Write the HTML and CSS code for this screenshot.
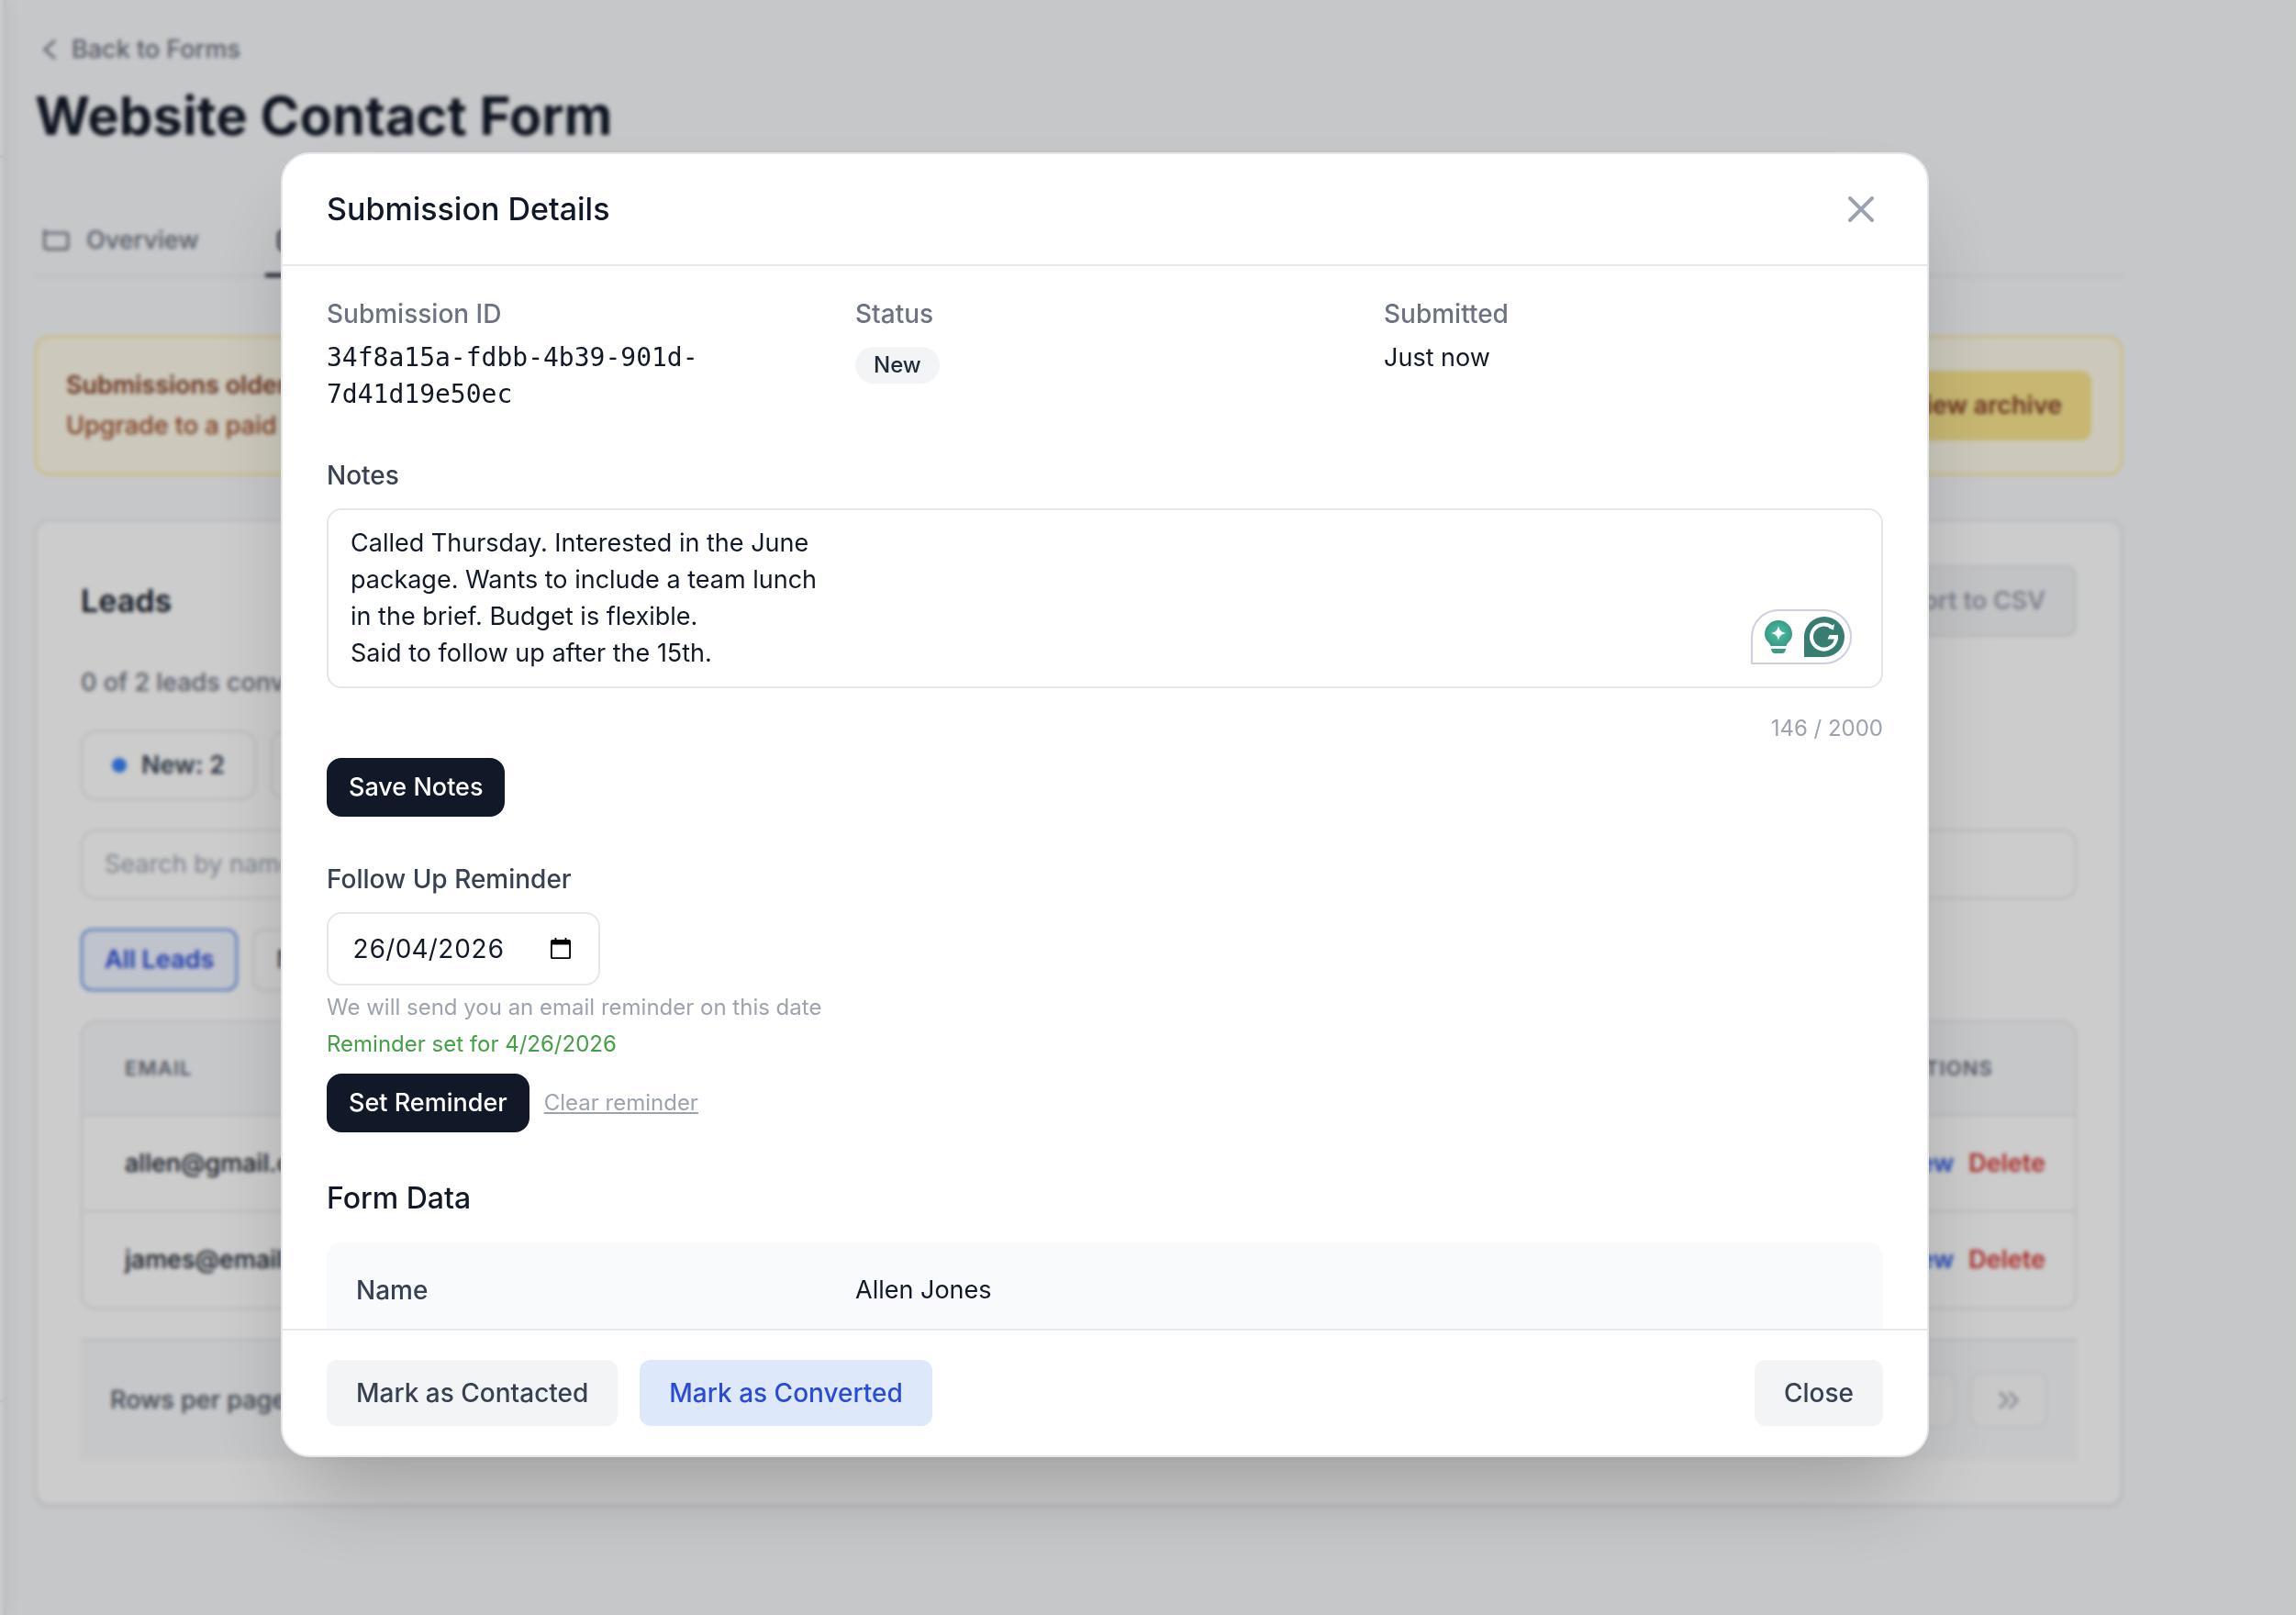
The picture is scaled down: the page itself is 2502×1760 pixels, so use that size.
FILE: index.html
```html
<!DOCTYPE html>
<html lang="en">
  <head>
    <meta charset="UTF-8" />
    <meta name="viewport" content="width=device-width, initial-scale=1.0" />
    <title>Website Contact Form</title>
    <link rel="stylesheet" href="styles.css">
  </head>
  <body>
    <aside class="sidebar">
      <div class="sidebar-brand"></div>
      <div class="sidebar-account"></div>
    </aside>

    <main class="page">
      <a class="back-link" href="#forms">
        <svg class="back-icon" viewBox="0 0 24 24"><path d="M16 19l-8-7 8-7" /></svg>
        Back to Forms
      </a>
      <h1>Website Contact Form</h1>

      <nav class="tabs">
        <a class="tab" href="#overview">
          <svg class="tab-icon" viewBox="0 0 24 24">
            <path d="M2 4v13a2 2 0 0 0 2 2h15a2 2 0 0 0 2-2V8a2 2 0 0 0-2-2H4a2 2 0 0 1-2-2" />
          </svg>
          Overview
        </a>
        <a class="tab tab-active" href="#leads">
          <svg class="tab-icon" viewBox="0 0 24 24">
            <rect x="5" y="4" width="14" height="16" rx="4" />
            <path d="M9 10h6M9 14h6" />
          </svg>
          Leads
        </a>
      </nav>

      <section class="banner">
        <div>
          <p class="banner-title">Submissions older than 30 days</p>
          <p class="banner-text">Upgrade to a paid plan</p>
        </div>
        <button class="banner-button" type="button">View archive</button>
      </section>

      <section class="card">
        <div class="card-header">
          <h2>Leads</h2>
          <button class="export-button" type="button">Export to CSV</button>
        </div>
        <p class="summary">0 of 2 leads converted</p>
        <div class="chips">
          <span class="chip"><span class="dot"></span>New: 2</span>
          <span class="chip"><span class="dot dot-amber"></span>0</span>
        </div>
        <input class="search" type="search" aria-label="Search leads" placeholder="Search by name or email" />
        <div class="filters">
          <button class="filter filter-active" type="button">All Leads</button>
          <button class="filter" type="button">New</button>
        </div>
        <div class="table-wrapper">
          <table>
            <thead>
              <tr>
                <th>Email</th>
                <th class="actions">Actions</th>
              </tr>
            </thead>
            <tbody>
              <tr>
                <td>allen@gmail.com</td>
                <td class="actions"><button class="view" type="button">View</button><button class="delete" type="button">Delete</button></td>
              </tr>
              <tr>
                <td>james@email.com</td>
                <td class="actions"><button class="view" type="button">View</button><button class="delete" type="button">Delete</button></td>
              </tr>
            </tbody>
          </table>
        </div>
        <div class="pagination">
          <span>Rows per page</span>
          <div class="pager">
            <button class="pager-button" type="button" aria-label="Next page">
              <svg viewBox="0 0 24 24"><path d="M9 18l6-6-6-6" /></svg>
            </button>
            <button class="pager-button" type="button" aria-label="Last page">
              <svg viewBox="0 0 24 24"><path d="M5 18l6-6-6-6M13 18l6-6-6-6" /></svg>
            </button>
          </div>
        </div>
      </section>
    </main>

    <div class="overlay">
      <div class="modal" role="dialog" aria-modal="true" aria-labelledby="modal-title">
        <header class="modal-header">
          <h2 id="modal-title">Submission Details</h2>
          <button class="close-icon" type="button" aria-label="Close">
            <svg viewBox="0 0 24 24"><path d="M6 18L18 6M6 6l12 12" /></svg>
          </button>
        </header>

        <div class="modal-body">
          <dl class="details">
            <div>
              <dt>Submission ID</dt>
              <dd class="mono">34f8a15a-fdbb-4b39-901d-7d41d19e50ec</dd>
            </div>
            <div>
              <dt>Status</dt>
              <dd><span class="badge">New</span></dd>
            </div>
            <div>
              <dt>Submitted</dt>
              <dd>Just now</dd>
            </div>
          </dl>

          <section class="field">
            <label for="notes">Notes</label>
            <div class="notes-wrapper">
              <textarea id="notes" rows="4" maxlength="2000" spellcheck="false">Called Thursday. Interested in the June
package. Wants to include a team lunch
in the brief. Budget is flexible.
Said to follow up after the 15th.</textarea>
              <div class="assistant">
                <svg class="assistant-bulb" viewBox="0 0 32 38">
                  <defs>
                    <radialGradient id="bulb">
                      <stop offset="0.3" stop-color="#43b99d" />
                      <stop offset="1" stop-color="#3c9a85" />
                    </radialGradient>
                  </defs>
                  <path fill="url(#bulb)" d="M16 1a15 15 0 0 1 15 15c0 5-3 8-5 10-1 1-1 3-2 3H8c-1 0-1-2-2-3-2-2-5-5-5-10A15 15 0 0 1 16 1z" />
                  <path fill="#fff" d="M16 7c1 5 3 7 8 8-5 1-7 3-8 8-1-5-3-7-8-8 5-1 7-3 8-8z" />
                  <path fill="#3c9a85" d="M8 32h16c0 3-2 5-4 5h-8c-2 0-4-2-4-5z" />
                </svg>
                <svg class="assistant-logo" viewBox="0 0 44 44">
                  <path fill="#377d71" d="M22 0a22 22 0 0 1 0 44H0V22A22 22 0 0 1 22 0z" />
                  <path fill="none" stroke="#fff" stroke-width="4" d="M30.500 12A13.500 13.500 0 1 0 35 22.500" />
                  <path fill="#fff" d="M33 8l-1 6.500-5-2z" />
                  <path fill="#fff" d="M25.500 24.500l2-4.500h9.500v4.500z" />
                </svg>
              </div>
            </div>
            <p class="counter">146 / 2000</p>
            <button class="primary" type="button">Save Notes</button>
          </section>

          <section class="field">
            <label for="reminder">Follow Up Reminder</label>
            <div class="date-field">
              <input id="reminder" type="text" inputmode="numeric" value="26/04/2026" />
              <button class="calendar" type="button" aria-label="Open calendar">
                <svg viewBox="0 0 24 26">
                  <path fill="#000" d="M5 0h2v2h10V0h2v2h3a2 2 0 0 1 2 2v19a2 2 0 0 1-2 2H2a2 2 0 0 1-2-2V4a2 2 0 0 1 2-2h3zM2 8v15h20V8z" />
                </svg>
              </button>
            </div>
            <p class="hint">We will send you an email reminder on this date</p>
            <p class="success">Reminder set for 4/26/2026</p>
            <div class="reminder-actions">
              <button class="primary" type="button">Set Reminder</button>
              <button class="clear" type="button">Clear reminder</button>
            </div>
          </section>

          <section class="field">
            <h3>Form Data</h3>
            <dl class="form-data">
              <dt>Name</dt>
              <dd>Allen Jones</dd>
            </dl>
          </section>
        </div>

        <footer class="modal-footer">
          <button class="secondary" type="button">Mark as Contacted</button>
          <button class="secondary convert" type="button">Mark as Converted</button>
          <button class="secondary close" type="button">Close</button>
        </footer>
      </div>
    </div>
  </body>
</html>
```
FILE: styles.css
```css
* {
  box-sizing: border-box;
}
body {
  display: flex;
  min-height: 100vh;
  margin: 0;
  background-color: #f8f9fb;
  font-family: "Inter", sans-serif;
  font-size: 27px;
  line-height: 40px;
  color: #111827;
}
h1,
h2,
h3,
p,
dl,
dd {
  margin: 0;
}
a {
  text-decoration: none;
}
button,
input,
textarea {
  font: inherit;
  color: inherit;
}
button {
  padding: 0;
  border: none;
  background: transparent;
  font-weight: 500;
  white-space: nowrap;
  cursor: pointer;
}
svg {
  display: block;
  fill: none;
  stroke-linecap: round;
  stroke-linejoin: round;
}

/* page behind the dialog */
.sidebar {
  display: flex;
  flex-direction: column;
  justify-content: space-between;
  flex: 0 0 6px;
  border-right: 2px solid #e5e7eb;
  background-color: white;
  box-shadow: 0 0 16px rgba(0, 0, 0, 0.1);
}
.sidebar-brand {
  height: 172px;
  border-bottom: 2px solid #e5e7eb;
}
.sidebar-account {
  height: 234px;
  border-top: 2px solid #e5e7eb;
}
.page {
  flex: 1;
  min-width: 0;
  padding: 34px 189px 64px 32px;
}
.back-link {
  display: flex;
  align-items: center;
  gap: 8px;
  width: fit-content;
  font-weight: 500;
  color: #6b7280;
}
.back-icon {
  width: 32px;
  height: 32px;
  stroke: #6b7280;
  stroke-width: 2;
}
h1 {
  margin-top: 16px;
  font-size: 58px;
  line-height: 72px;
  font-weight: 700;
}
.tabs {
  display: flex;
  gap: 64px;
  margin: 64px 0;
  border-bottom: 2px solid #e5e7eb;
}
.tab {
  display: flex;
  align-items: center;
  gap: 16px;
  margin-bottom: -2px;
  padding: 16px 8px;
  border-bottom: 4px solid transparent;
  font-weight: 500;
  color: #6b7280;
}
.tab-active {
  border-color: #111827;
  color: #111827;
}
.tab-icon {
  width: 32px;
  height: 32px;
  stroke: currentColor;
  stroke-width: 2;
}
.banner {
  display: flex;
  justify-content: space-between;
  align-items: center;
  margin-bottom: 48px;
  padding: 32px;
  border: 2px solid #fde68a;
  border-radius: 16px;
  background-color: #fffbeb;
}
.banner-title {
  margin-bottom: 4px;
  font-weight: 600;
  color: #854028;
}
.banner-text {
  font-weight: 500;
  color: #a04f2c;
}
.banner-button {
  padding: 18px 32px;
  border-radius: 12px;
  background-color: #f9e58f;
  font-weight: 600;
  color: #854028;
}
.card {
  padding: 48px;
  border: 2px solid #e5e7eb;
  border-radius: 16px;
  background-color: white;
  box-shadow: 0 2px 4px rgba(0, 0, 0, 0.06);
}
.card-header {
  display: flex;
  justify-content: space-between;
  align-items: center;
  margin-bottom: 30px;
}
.card-header h2 {
  font-size: 34px;
  font-weight: 600;
}
.export-button {
  padding: 17px 32px;
  border: 2px solid #e5e7eb;
  border-radius: 12px;
  background-color: #f3f4f6;
  font-weight: 600;
  color: #9ca3af;
}
.summary {
  font-weight: 500;
  color: #6b7280;
}
.chips {
  display: flex;
  gap: 16px;
  margin: 32px 0;
}
.chip {
  display: flex;
  align-items: center;
  gap: 16px;
  padding: 16px 32px;
  border: 2px solid #e5e7eb;
  border-radius: 16px;
  font-weight: 600;
  color: #374151;
}
.dot {
  width: 16px;
  height: 16px;
  border-radius: 50%;
  background-color: #3b82f6;
}
.dot-amber {
  background-color: #f59e0b;
}
.search {
  display: block;
  width: 100%;
  padding: 16px 24px;
  border: 2px solid #e5e7eb;
  border-radius: 16px;
  background-color: white;
  appearance: none;
}
.search::placeholder {
  color: #9ca3af;
}
.filters {
  display: flex;
  gap: 16px;
  margin: 32px 0;
}
.filter {
  padding: 12px 24px;
  border: 2px solid #e5e7eb;
  border-radius: 12px;
  color: #374151;
}
.filter-active {
  border-color: #4f84ee;
  background-color: #eff4ff;
  font-weight: 600;
  color: #2a4bd7;
}
.table-wrapper {
  border: 2px solid #e5e7eb;
  border-radius: 16px;
  overflow: hidden;
}
table {
  width: 100%;
  border-collapse: collapse;
}
th,
td {
  height: 105px;
  padding: 0 0 0 46px;
  border-bottom: 2px solid #e5e7eb;
  text-align: left;
  font-weight: 500;
}
th {
  height: 101px;
  background-color: #f8f9fb;
  font-size: 22px;
  font-weight: 600;
  letter-spacing: 0.05em;
  text-transform: uppercase;
  color: #6b7280;
}
tbody tr:last-child td {
  border-bottom: none;
}
.actions {
  width: 1%;
  padding-right: 32px;
  white-space: nowrap;
}
.actions button {
  font-weight: 600;
}
.view {
  margin-right: 16px;
  color: #2f5be0;
}
.delete {
  color: #d63a35;
}
.pagination {
  display: flex;
  justify-content: space-between;
  align-items: center;
  margin-top: 32px;
  padding: 35px 32px;
  border-top: 2px solid #e5e7eb;
  background-color: #f8f9fb;
  font-weight: 500;
  color: #4b5563;
}
.pager {
  display: flex;
  gap: 16px;
}
.pager-button {
  padding: 12px 24px;
  border: 2px solid #e5e7eb;
  border-radius: 12px;
  background-color: white;
  opacity: 0.6;
}
.pager-button svg {
  width: 32px;
  height: 32px;
  stroke: #6b7280;
  stroke-width: 2;
}

/* dialog */
.overlay {
  position: fixed;
  inset: 0;
  display: flex;
  padding: 166px 400px 172px 306px;
  background-color: rgba(0, 0, 0, 0.2);
  backdrop-filter: blur(2px);
}
.modal {
  display: flex;
  flex-direction: column;
  flex: 1;
  min-width: 0;
  border: 2px solid #e5e7eb;
  border-radius: 32px;
  background-color: white;
  box-shadow: 0 50px 100px -24px rgba(0, 0, 0, 0.25);
  overflow: hidden;
}
.modal-header {
  display: flex;
  justify-content: space-between;
  align-items: center;
  padding: 32px 48px;
  border-bottom: 2px solid #e5e7eb;
}
.modal-header h2 {
  font-size: 34px;
  line-height: 56px;
  font-weight: 500;
}
.close-icon svg {
  width: 48px;
  height: 48px;
  stroke: #9ca3af;
  stroke-width: 2;
}
.modal-body {
  flex: 1;
  min-height: 0;
  padding: 32px 48px;
  overflow-y: auto;
  scrollbar-width: none;
}
.details {
  display: grid;
  grid-template-columns: repeat(3, 1fr);
  gap: 32px;
}
.details dt {
  margin-bottom: 8px;
  font-size: 28px;
  font-weight: 500;
  color: #6b7280;
}
.details .mono {
  font-family: "DejaVu Sans Mono", monospace;
  font-size: 28px;
}
.badge {
  display: inline-block;
  margin-top: 8px;
  padding: 4px 20px;
  border-radius: 20px;
  background-color: #f3f4f6;
  font-size: 24px;
  line-height: 32px;
  font-weight: 500;
  color: #1f2937;
}
.field {
  margin-top: 48px;
}
.field label {
  display: block;
  margin-bottom: 16px;
  font-size: 28px;
  font-weight: 500;
  color: #374151;
}
.notes-wrapper {
  position: relative;
}
textarea {
  display: block;
  width: 100%;
  padding: 16px 24px;
  border: 2px solid #e5e7eb;
  border-radius: 16px;
  background-color: white;
  resize: none;
  overflow: hidden;
}
.assistant {
  position: absolute;
  right: 34px;
  bottom: 26px;
  display: flex;
  align-items: center;
  gap: 12px;
  padding: 6px 6px 6px 12px;
  border: 2px solid #cbcfe0;
  border-radius: 30px 30px 30px 0;
  background-color: white;
}
.assistant-bulb {
  width: 32px;
  height: 38px;
}
.assistant-logo {
  width: 44px;
  height: 44px;
  stroke-linecap: butt;
}
.counter,
.hint,
.success,
.clear {
  font-size: 24px;
  line-height: 32px;
}
.counter {
  margin: 28px 0 16px;
  text-align: right;
  color: #9ca3af;
}
.primary {
  padding: 12px 24px;
  border-radius: 16px;
  background-color: #111827;
  color: white;
}
.date-field {
  display: flex;
  align-items: center;
  width: 298px;
  padding: 18px 30px 18px 26px;
  border: 2px solid #e5e7eb;
  border-radius: 16px;
}
.date-field input {
  flex: 1;
  min-width: 0;
  padding: 0;
  border: none;
  outline: none;
  background: transparent;
  font-size: 28px;
  font-variant-numeric: tabular-nums;
}
.calendar svg {
  width: 22px;
  height: 24px;
}
.hint {
  margin-top: 8px;
  color: #9ca3af;
}
.success {
  margin: 8px 0 16px;
  color: #43a047;
}
.reminder-actions {
  display: flex;
  align-items: center;
  gap: 16px;
}
.clear {
  font-weight: 400;
  text-decoration: underline;
  color: #9ca3af;
}
h3 {
  margin-bottom: 24px;
  font-size: 32px;
  line-height: 48px;
  font-weight: 500;
}
.form-data {
  display: grid;
  grid-template-columns: 1fr 2fr;
  padding: 32px;
  border-radius: 16px;
  background-color: #f9fafb;
}
.form-data dt {
  font-size: 28px;
  font-weight: 500;
  color: #374151;
}
.modal-footer {
  display: flex;
  gap: 24px;
  padding: 32px 48px;
  border-top: 2px solid #e5e7eb;
}
.secondary {
  padding: 16px 32px;
  border-radius: 12px;
  background-color: #f3f4f6;
  font-size: 28px;
  color: #374151;
}
.convert {
  background-color: #dde8fb;
  color: #2a4bd7;
}
.close {
  margin-left: auto;
}
```
